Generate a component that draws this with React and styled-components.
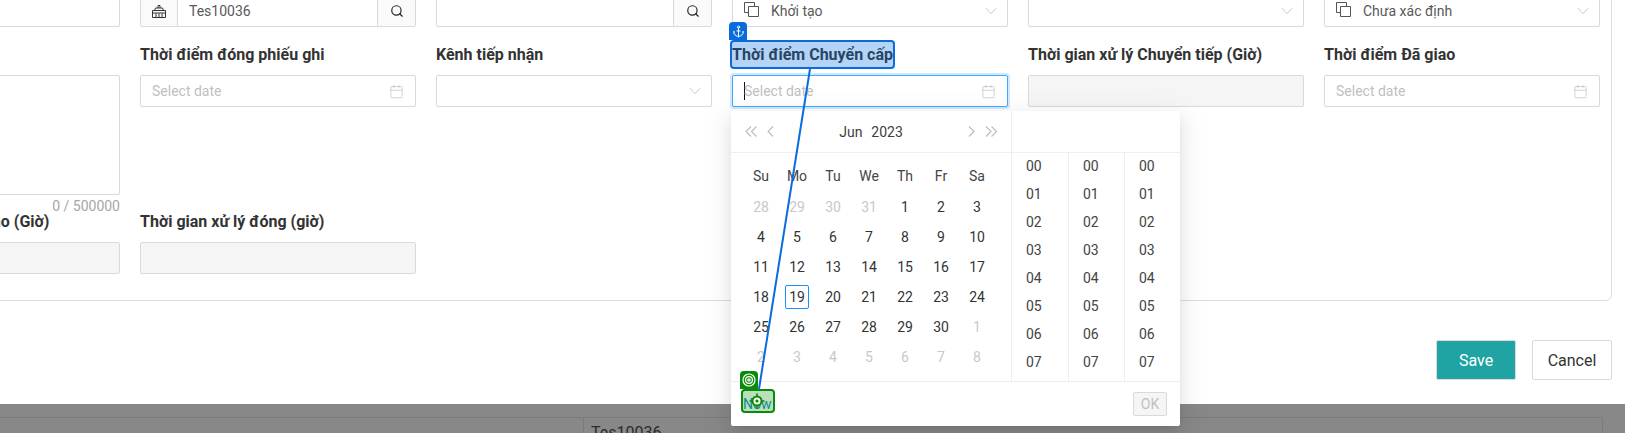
import React from "react";
import styled, { createGlobalStyle } from "styled-components";
import { Anchor, Search, Calendar, ChevronDown } from "lucide-react";

const GlobalStyle = createGlobalStyle`
  html, body {
    margin: 0;
    padding: 0;
    background: #848484;
  }
  body {
    font-family: Roboto, "Noto Sans", sans-serif;
    font-size: 14px;
    color: #333;
  }
`;

const Page = styled.div`
  position: relative;
  width: 1625px;
  height: 433px;
  overflow: hidden;
  background: linear-gradient(#7b7b7b, #888 14px);
`;

const Modal = styled.div`
  height: 404px;
  background: #fff;
  overflow: hidden;
`;

const Panel = styled.div`
  margin: -41px 0 0 -170px;
  width: 1782px;
  height: 342px;
  box-sizing: border-box;
  border: 1px solid #ddd;
  border-radius: 6px;
  padding: 0 0 0 13px;
`;

const Grid = styled.div`
  display: grid;
  grid-template-columns: repeat(6, 276px);
  column-gap: 20px;
  grid-template-rows: 67px 167px 60px;
`;

const Field = styled.div`
  display: flex;
  flex-direction: column;
`;

const TopField = styled(Field)`
  justify-content: flex-end;
`;

const Label = styled.div`
  flex: none;
  height: 28px;
  margin: 14px 0 6px;
  line-height: 28px;
  font-size: 16px;
  font-weight: 700;
  color: #333;
  white-space: nowrap;
`;

const Box = styled.div`
  display: flex;
  flex: none;
  align-items: center;
  box-sizing: border-box;
  height: 32px;
  padding: 0 11px;
  background: ${(p) => (p.$disabled ? "#f5f5f5" : "#fff")};
  border: 1px solid ${(p) => (p.$focus ? "#40a9ff" : "#d9d9d9")};
  border-radius: 2px;
  box-shadow: ${(p) => (p.$focus ? "0 0 0 2px rgba(24,144,255,.2)" : "none")};
  color: #595959;
`;

const Placeholder = styled.span`
  flex: 1;
  color: #bfbfbf;
`;

const Caret = styled.span`
  width: 1px;
  height: 18px;
  margin-right: -1px;
  background: #111;
`;

const Value = styled.span`
  flex: 1;
  margin-left: ${(p) => p.$gap || 0}px;
`;

const AddonGroup = styled.div`
  display: flex;
  height: 32px;
  box-sizing: border-box;
  border: 1px solid #d9d9d9;
  border-radius: 2px;
  color: #595959;
`;

const AddonLeft = styled.div`
  display: flex;
  align-items: center;
  justify-content: center;
  width: 36px;
  background: #fafafa;
  border-right: 1px solid #d9d9d9;
  color: #333;
`;

const AddonInput = styled.div`
  flex: 1;
  display: flex;
  align-items: center;
  padding: 0 11px;
`;

const SearchBtn = styled.div`
  display: flex;
  align-items: center;
  justify-content: center;
  width: 37px;
  background: #fafafa;
  border-left: 1px solid #d9d9d9;
  color: #222;
`;

const Counter = styled.div`
  flex: none;
  height: 20px;
  margin-top: 1px;
  line-height: 20px;
  text-align: right;
  color: #a6a6a6;
  font-size: 14px;
`;

const TextArea = styled(Box)`
  height: 120px;
`;

const Footer = styled.div`
  display: flex;
  justify-content: flex-end;
  gap: 16px;
  margin: 39px 13px 0 0;
`;

const Button = styled.div`
  display: flex;
  align-items: center;
  justify-content: center;
  box-sizing: border-box;
  width: 80px;
  height: 40px;
  font-size: 16px;
  border: 1px solid #d9d9d9;
  border-radius: 2px;
  background: ${(p) => (p.$primary ? "#20a3a3" : "#fff")};
  color: ${(p) => (p.$primary ? "#fff" : "#333")};
`;

const BackdropTable = styled.div`
  position: absolute;
  left: -1px;
  top: 417px;
  width: 1602px;
  height: 30px;
  border: 1px solid #7b7b7b;
`;

const BackdropCell = styled.div`
  margin-left: 583px;
  height: 30px;
  padding: 5px 7px;
  border-left: 1px solid #7b7b7b;
  color: #2b2b2b;
  font-size: 16px;
`;

/* date picker popup, hangs over the form */
const Popup = styled.div`
  position: absolute;
  left: 731px;
  top: 111px;
  width: 449px;
  height: 315px;
  display: grid;
  grid-template-columns: 281px 168px;
  grid-template-rows: 270px 45px;
  background: #fff;
  border-radius: 2px;
  box-shadow: 0 3px 6px -4px rgba(0,0,0,.12), 0 6px 16px rgba(0,0,0,.08), 0 9px 28px 8px rgba(0,0,0,.05);
`;

const DatePane = styled.div`
  border-right: 1px solid #eee;
`;

const DateHead = styled.div`
  display: flex;
  align-items: center;
  height: 41px;
  padding: 0 14px;
  border-bottom: 1px solid #eee;
  color: #bbb;
`;

const HeadTitle = styled.div`
  flex: 1;
  text-align: center;
  color: #404040;
  white-space: pre;
  word-spacing: 1px;
`;

const Days = styled.div`
  display: grid;
  grid-template-columns: repeat(7, 36px);
  grid-template-rows: 33px;
  grid-auto-rows: 30px;
  padding: 6px 0 0 12px;
`;

const DayCell = styled.div`
  display: flex;
  align-items: center;
  justify-content: center;
  color: ${(p) => (p.$muted ? "#c8c8c8" : "#333")};
`;

const DayText = styled.span`
  display: flex;
  align-items: center;
  justify-content: center;
  box-sizing: border-box;
  width: 24px;
  height: 24px;
  border-radius: 2px;
  border: ${(p) => (p.$today ? "1px solid #1890ff" : "none")};
`;

const WeekCell = styled(DayCell)`
  color: #444;
`;

const TimePane = styled.div`
  display: flex;
  flex-direction: column;
  overflow: hidden;
`;

const TimeHead = styled.div`
  flex: none;
  height: 41px;
  border-bottom: 1px solid #eee;
`;

const TimeCols = styled.div`
  flex: 1;
  display: grid;
  grid-template-columns: 57px 56px 55px;
  overflow: hidden;
`;

const TimeCol = styled.div`
  border-right: 1px solid #eee;
  margin-top: -1px;

  &:last-child {
    border-right: none;
  }
`;

const TimeCell = styled.div`
  height: 28px;
  line-height: 28px;
  padding-left: 14px;
  color: #444;
`;

const PopupFoot = styled.div`
  grid-column: 1 / 3;
  display: flex;
  align-items: center;
  justify-content: space-between;
  padding: 0 13px 0 12px;
  border-top: 1px solid #eee;
`;

const NowLink = styled.span`
  color: #0f8fd0;
`;

const OkBtn = styled.div`
  display: flex;
  align-items: center;
  justify-content: center;
  box-sizing: border-box;
  width: 34px;
  height: 24px;
  background: #f5f5f5;
  border: 1px solid #d9d9d9;
  border-radius: 2px;
  color: #bfbfbf;
`;

/* inspector marks drawn on top of the page */
const Highlight = styled.div`
  position: absolute;
  left: ${(p) => p.$x}px;
  top: ${(p) => p.$y}px;
  width: ${(p) => p.$w}px;
  height: ${(p) => p.$h}px;
  box-sizing: border-box;
  border: 2px solid ${(p) => p.$color};
  border-radius: 4px;
  background: ${(p) => p.$fill};
`;

const Tab = styled.div`
  position: absolute;
  left: ${(p) => p.$x}px;
  top: ${(p) => p.$y}px;
  width: 18px;
  height: 18px;
  display: flex;
  align-items: center;
  justify-content: center;
  background: ${(p) => p.$color};
  border-radius: 4px 4px 0 0;
  color: #fff;
`;

const Overlay = styled.svg`
  position: absolute;
  left: 0;
  top: 0;
  pointer-events: none;
`;

const CopySvg = styled.svg`
  flex: none;
  margin-top: -4px;
`;

const SelectArrow = styled(ChevronDown)`
  flex: none;
  margin-right: -5px;
`;

const NavGap = styled.span`
  width: 10px;
`;

const BLUE = "#0a6cdc";
const GREEN = "#098a09";

const BrushIcon = () => (
  <svg width="14" height="13" viewBox="0 0 14 13" fill="none" stroke="currentColor" strokeWidth="1">
    <path d="M6 3V.5h2V3" />
    <path d="M2.5 5.5 3.5 3h7l1 2.5" />
    <path d="M.5 5.5h13V12.5H.5z" />
    <path d="M.5 8h13" />
    <path d="M4 8.5v4M7 8.5v4M10 8.5v4" />
  </svg>
);

const CopyIcon = () => (
  <CopySvg width="15" height="15" viewBox="0 0 15 15" fill="none" stroke="#555" strokeWidth="1">
    <path d="M4.5 10.5h-4v-10h10v4" />
    <path d="M4.5 4.5h10v10h-10z" />
  </CopySvg>
);

const TargetIcon = () => (
  <svg width="14" height="14" viewBox="0 0 14 14" fill="none" stroke="#fff" strokeWidth="1.2">
    <circle cx="7" cy="7" r="6" />
    <circle cx="7" cy="7" r="3.4" />
    <circle cx="7" cy="7" r="1.2" />
  </svg>
);

const Crosshair = () => (
  <g fill="none" stroke={GREEN}>
    <circle cx="757" cy="401" r="4.5" strokeWidth="2" fill="#fff" />
    <circle cx="757" cy="401" r="1.6" fill={GREEN} stroke="none" />
    <path d="M757 393.5v3M757 405.5v3M749.5 401h3M761.5 401h3" strokeWidth="1.6" />
  </g>
);

// month and year arrows of the picker head
const NavArrow = ({ dir, double }) => (
  <svg width={double ? 12 : 7} height="11" viewBox={double ? "0 0 12 11" : "0 0 7 11"} fill="none" stroke="currentColor" strokeWidth="1.1">
    {dir === "left" ? (
      <>
        <path d="M6 .5 1 5.5l5 5" />
        {double && <path d="M11.5.5l-5 5 5 5" />}
      </>
    ) : (
      <>
        <path d="M1 .5l5 5-5 5" />
        {double && <path d="M6.5.5l5 5-5 5" />}
      </>
    )}
  </svg>
);

const weekDays = ["Su", "Mo", "Tu", "We", "Th", "Fr", "Sa"];
const days = [
  [28, 1], [29, 1], [30, 1], [31, 1], [1], [2], [3],
  [4], [5], [6], [7], [8], [9], [10],
  [11], [12], [13], [14], [15], [16], [17],
  [18], [19], [20], [21], [22], [23], [24],
  [25], [26], [27], [28], [29], [30], [1, 1],
  [2, 1], [3, 1], [4, 1], [5, 1], [6, 1], [7, 1], [8, 1],
];
const hours = ["00", "01", "02", "03", "04", "05", "06", "07"];

const CalIcon = () => <Calendar size={15} strokeWidth={1.2} color="#c4c4c4" />;
const Chevron = () => <SelectArrow size={20} strokeWidth={1.1} color="#bfbfbf" />;
const SearchIcon = () => <Search size={14} strokeWidth={2} />;

function TimeColumn() {
  return (
    <TimeCol>
      {hours.map((h) => (
        <TimeCell key={h}>{h}</TimeCell>
      ))}
    </TimeCol>
  );
}

export default function App() {
  return (
    <Page>
      <GlobalStyle />
      <Modal>
        <Panel>
          <Grid>
            <TopField><Box /></TopField>
            <TopField>
              <AddonGroup>
                <AddonLeft><BrushIcon /></AddonLeft>
                <AddonInput>Tes10036</AddonInput>
                <SearchBtn><SearchIcon /></SearchBtn>
              </AddonGroup>
            </TopField>
            <TopField>
              <AddonGroup>
                <AddonInput />
                <SearchBtn><SearchIcon /></SearchBtn>
              </AddonGroup>
            </TopField>
            <TopField>
              <Box>
                <CopyIcon />
                <Value $gap={12}>Khởi tạo</Value>
                <Chevron />
              </Box>
            </TopField>
            <TopField>
              <Box>
                <Value />
                <Chevron />
              </Box>
            </TopField>
            <TopField>
              <Box>
                <CopyIcon />
                <Value $gap={12}>Chưa xác định</Value>
                <Chevron />
              </Box>
            </TopField>

            <Field>
              <Label />
              <TextArea />
              <Counter>0 / 500000</Counter>
            </Field>
            <Field>
              <Label>Thời điểm đóng phiếu ghi</Label>
              <Box><Placeholder>Select date</Placeholder><CalIcon /></Box>
            </Field>
            <Field>
              <Label>Kênh tiếp nhận</Label>
              <Box><Value /><Chevron /></Box>
            </Field>
            <Field>
              <Label>Thời điểm Chuyển cấp</Label>
              <Box $focus><Caret /><Placeholder>Select date</Placeholder><CalIcon /></Box>
            </Field>
            <Field>
              <Label>Thời gian xử lý Chuyển tiếp (Giờ)</Label>
              <Box $disabled />
            </Field>
            <Field>
              <Label>Thời điểm Đã giao</Label>
              <Box><Placeholder>Select date</Placeholder><CalIcon /></Box>
            </Field>

            <Field>
              <Label>Thời gian xử lý báo cáo (Giờ)</Label>
              <Box $disabled />
            </Field>
            <Field>
              <Label>Thời gian xử lý đóng (giờ)</Label>
              <Box $disabled />
            </Field>
          </Grid>
        </Panel>
        <Footer>
          <Button $primary>Save</Button>
          <Button>Cancel</Button>
        </Footer>
      </Modal>

      <BackdropTable>
        <BackdropCell>Tes10036</BackdropCell>
      </BackdropTable>

      <Popup>
        <DatePane>
          <DateHead>
            <NavArrow dir="left" double />
            <NavGap />
            <NavArrow dir="left" />
            <HeadTitle>Jun  2023</HeadTitle>
            <NavArrow dir="right" />
            <NavGap />
            <NavArrow dir="right" double />
          </DateHead>
          <Days>
            {weekDays.map((d) => (
              <WeekCell key={d}>{d}</WeekCell>
            ))}
            {days.map(([d, muted], i) => (
              <DayCell key={i} $muted={!!muted}>
                <DayText $today={d === 19}>{d}</DayText>
              </DayCell>
            ))}
          </Days>
        </DatePane>
        <TimePane>
          <TimeHead />
          <TimeCols>
            <TimeColumn />
            <TimeColumn />
            <TimeColumn />
          </TimeCols>
        </TimePane>
        <PopupFoot>
          <NowLink>Now</NowLink>
          <OkBtn>OK</OkBtn>
        </PopupFoot>
      </Popup>

      <Highlight $x={730} $y={40} $w={165} $h={29} $color={BLUE} $fill="rgba(10,108,220,.3)" />
      <Tab $x={729} $y={22} $color={BLUE}><Anchor size={13} strokeWidth={1.8} /></Tab>
      <Highlight $x={741} $y={389} $w={34} $h={24} $color={GREEN} $fill="rgba(9,138,9,.28)" />
      <Tab $x={740} $y={371} $color={GREEN}><TargetIcon /></Tab>
      <Overlay width="1625" height="433">
        <line x1="810" y1="69" x2="759" y2="389" stroke={BLUE} strokeWidth="2" />
        <Crosshair />
      </Overlay>
    </Page>
  );
}
